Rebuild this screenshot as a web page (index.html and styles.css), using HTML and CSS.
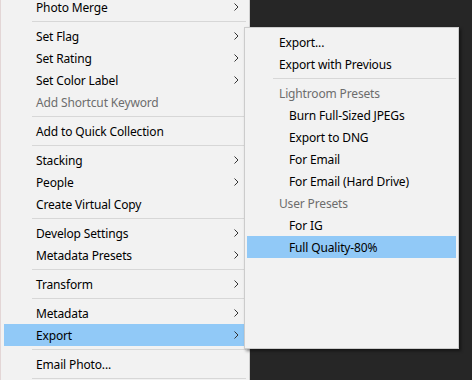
FILE: index.html
```html
<!DOCTYPE html>
<html lang="en">
<head>
    <meta charset="UTF-8">
    <title>Export menu</title>
    <link rel="stylesheet" href="styles.css">
</head>
<body>
    <div class="screen">
        <ul class="menu main-menu">
            <li class="item">Photo Merge<span class="arrow"><svg width="5" height="8" viewBox="0 0 5 8"><path d="M0.5 0.5 L4 4 L0.5 7.5" fill="none" stroke="#333" stroke-width="1"/></svg></span></li>
            <li class="sep"></li>
            <li class="item">Set Flag<span class="arrow"><svg width="5" height="8" viewBox="0 0 5 8"><path d="M0.5 0.5 L4 4 L0.5 7.5" fill="none" stroke="#333" stroke-width="1"/></svg></span></li>
            <li class="item">Set Rating<span class="arrow"><svg width="5" height="8" viewBox="0 0 5 8"><path d="M0.5 0.5 L4 4 L0.5 7.5" fill="none" stroke="#333" stroke-width="1"/></svg></span></li>
            <li class="item">Set Color Label<span class="arrow"><svg width="5" height="8" viewBox="0 0 5 8"><path d="M0.5 0.5 L4 4 L0.5 7.5" fill="none" stroke="#333" stroke-width="1"/></svg></span></li>
            <li class="item disabled">Add Shortcut Keyword</li>
            <li class="sep"></li>
            <li class="item">Add to Quick Collection</li>
            <li class="sep"></li>
            <li class="item">Stacking<span class="arrow"><svg width="5" height="8" viewBox="0 0 5 8"><path d="M0.5 0.5 L4 4 L0.5 7.5" fill="none" stroke="#333" stroke-width="1"/></svg></span></li>
            <li class="item">People<span class="arrow"><svg width="5" height="8" viewBox="0 0 5 8"><path d="M0.5 0.5 L4 4 L0.5 7.5" fill="none" stroke="#333" stroke-width="1"/></svg></span></li>
            <li class="item">Create Virtual Copy</li>
            <li class="sep"></li>
            <li class="item">Develop Settings<span class="arrow"><svg width="5" height="8" viewBox="0 0 5 8"><path d="M0.5 0.5 L4 4 L0.5 7.5" fill="none" stroke="#333" stroke-width="1"/></svg></span></li>
            <li class="item">Metadata Presets<span class="arrow"><svg width="5" height="8" viewBox="0 0 5 8"><path d="M0.5 0.5 L4 4 L0.5 7.5" fill="none" stroke="#333" stroke-width="1"/></svg></span></li>
            <li class="sep"></li>
            <li class="item">Transform<span class="arrow"><svg width="5" height="8" viewBox="0 0 5 8"><path d="M0.5 0.5 L4 4 L0.5 7.5" fill="none" stroke="#333" stroke-width="1"/></svg></span></li>
            <li class="sep"></li>
            <li class="item">Metadata<span class="arrow"><svg width="5" height="8" viewBox="0 0 5 8"><path d="M0.5 0.5 L4 4 L0.5 7.5" fill="none" stroke="#333" stroke-width="1"/></svg></span></li>
            <li class="item active">Export<span class="arrow"><svg width="5" height="8" viewBox="0 0 5 8"><path d="M0.5 0.5 L4 4 L0.5 7.5" fill="none" stroke="#333" stroke-width="1"/></svg></span></li>
            <li class="sep"></li>
            <li class="item">Email Photo...</li>
            <li class="sep"></li>
        </ul>

        <ul class="menu sub-menu">
            <li class="item">Export...</li>
            <li class="item">Export with Previous</li>
            <li class="sep"></li>
            <li class="item header">Lightroom Presets</li>
            <li class="item preset">Burn Full-Sized JPEGs</li>
            <li class="item preset">Export to DNG</li>
            <li class="item preset">For Email</li>
            <li class="item preset">For Email (Hard Drive)</li>
            <li class="item header">User Presets</li>
            <li class="item preset">For IG</li>
            <li class="item preset active">Full Quality-80%</li>
        </ul>
    </div>
</body>
</html>
```

FILE: styles.css
```css
body {
    margin: 0;
    background-color: #262626;
    font-family: "Noto Sans", "Open Sans", sans-serif;
    font-size: 12px;
    letter-spacing: -0.15px;
    color: #000;
    overflow: hidden;
}
.screen {
    position: relative;
    width: 472px;
    height: 380px;
    overflow: hidden;
}
.menu {
    list-style: none;
    margin: 0;
    background-color: #f2f2f2;
}
.main-menu {
    width: 242px;
    margin-top: -4px;
    padding: 0 3px;
    border-left: 1px solid #e3d6d6;
    border-right: 1px solid #cfcfcf;
}
.item {
    display: flex;
    align-items: center;
    height: 22px;
    padding-left: 32px;
    white-space: nowrap;
}
.item.active {
    background-color: #91c9f7;
}
.item.disabled,
.item.header {
    color: #6d6d6d;
}
.arrow {
    margin-left: auto;
    margin-right: 7px;
    display: flex;
}
.sep {
    box-sizing: border-box;
    height: 7px;
    padding-top: 3px;
    margin-left: 28px;
}
.sep::after {
    content: "";
    display: block;
    height: 1px;
    background-color: #d7d7d7;
}
.sub-menu {
    position: absolute;
    left: 244px;
    top: 27px;
    width: 209px;
    height: 314px;
    padding: 3px 2px;
    border: 1px solid #cccccc;
    box-shadow: 2px 2px 3px rgba(0, 0, 0, 0.45);
}
.sub-menu .sep {
    margin-left: 26px;
}
.sub-menu .preset {
    padding-left: 42px;
}
```
